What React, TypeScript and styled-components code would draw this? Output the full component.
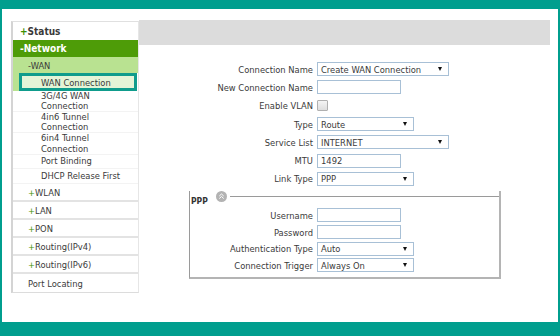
import styled, { createGlobalStyle } from "styled-components";

const GlobalStyle = createGlobalStyle`
  html, body {
    margin: 0;
    padding: 0;
    background: #009e8e;
  }
  body {
    font-family: "DejaVu Sans Condensed", "DejaVu Sans", sans-serif;
    font-stretch: condensed;
    font-size: 9.3px;
    color: #3a3a3a;
  }
`;

const Frame = styled.div`
  margin: 9px 0 0 2px;
  width: 556px;
  height: 313px;
  background: #ffffff;
  box-sizing: border-box;
  padding: 12px 0 0 9px;
  display: flex;
  align-items: flex-start;
`;

const Sidebar = styled.nav`
  width: 128px;
  box-sizing: border-box;
  border-left: 2px solid #d4d4d4;
  border-right: 1px solid #e6e6e6;
  border-top: 1px solid #e0e0e0;
  border-bottom: 1px solid #dcdcdc;
`;

const MenuRow = styled.div<{ $level: number; $h?: number; $bold?: boolean; $bg?: string; $color?: string; $line?: boolean }>`
  height: ${(p) => p.$h || 18}px;
  display: flex;
  align-items: center;
  padding-left: ${(p) => (p.$level === 0 ? 7 : 15)}px;
  font-weight: ${(p) => (p.$bold ? "bold" : "normal")};
  font-size: ${(p) => (p.$bold ? "10px" : "9.3px")};
  background: ${(p) => p.$bg || "transparent"};
  color: ${(p) => p.$color || "#3a3a3a"};
  border-bottom: ${(p) => (p.$line ? "2px solid #e3e3e3" : "none")};
  box-sizing: border-box;
`;

const Plus = styled.span<{ $bold?: boolean }>`
  color: #3c8f00;
  font-weight: ${(p) => (p.$bold ? "bold" : "normal")};
`;

const SubItem = styled.div<{ $h: number }>`
  height: ${(p) => p.$h}px;
  box-sizing: border-box;
  padding-left: 28px;
  display: flex;
  align-items: center;
  line-height: 10.5px;
  border-bottom: 1px solid #f3f3f3;
`;

const SubText = styled.span<{ $wrap: boolean }>`
  width: ${(p) => (p.$wrap ? "64px" : "auto")};
  white-space: ${(p) => (p.$wrap ? "normal" : "nowrap")};
`;

const SelectedWrap = styled.div`
  height: 18px;
  background: linear-gradient(to right, #b9e291 6px, transparent 6px);
`;

const SelectedItem = styled.div`
  margin-left: 6px;
  width: 118px;
  height: 18px;
  box-sizing: border-box;
  border: 3px solid #0f9c8c;
  background: #e4f4d7;
  padding-left: 19px;
  display: flex;
  align-items: center;
`;

const Main = styled.main`
  flex: 1;
  margin-top: -1px;
`;

const HeaderBar = styled.div`
  width: 411px;
  height: 25px;
  background: #dcdcdc;
`;

const Form = styled.div<{ $label: number }>`
  display: grid;
  grid-template-columns: ${(p) => p.$label}px 1fr;
  column-gap: 4px;
  align-items: center;
`;

const MainForm = styled(Form)`
  margin-top: 15px;
  grid-auto-rows: 18.3px;
`;

const BoxForm = styled(Form)`
  grid-auto-rows: 16.7px;
  margin-top: 6px;
`;

const Label = styled.div`
  text-align: right;
  white-space: nowrap;
`;

const Input = styled.div<{ $w: number }>`
  width: ${(p) => p.$w}px;
  height: 14px;
  box-sizing: border-box;
  border: 1px solid #a8c0d6;
  background: #fff;
  padding-left: 3px;
  display: flex;
  align-items: center;
`;

const Select = styled(Input)`
  justify-content: space-between;
  padding-right: 6px;
  &::after {
    content: "";
    border-left: 2.5px solid transparent;
    border-right: 2.5px solid transparent;
    border-top: 4px solid #111;
  }
`;

const Checkbox = styled.div`
  width: 9px;
  height: 9px;
  border: 1px solid #b0b0b0;
  background: linear-gradient(#f4f4f4, #dedede);
  border-radius: 1px;
`;

const Box = styled.div`
  margin: 8px 0 0 50px;
  width: 312px;
  height: 88px;
  box-sizing: border-box;
  border-left: 1px solid #9a9a9a;
  border-right: 2px solid #b4b4b4;
  border-bottom: 2px solid #b4b4b4;
`;

const BoxHead = styled.div`
  display: flex;
  align-items: flex-start;
  margin-top: -5px;
  height: 10px;
`;

const BoxTitle = styled.span`
  font-size: 8.5px;
  font-weight: bold;
  margin: 5px 0 0 1px;
  color: #333;
`;

const Toggle = styled.svg`
  margin-left: 8px;
  flex: none;
`;

const HeadLine = styled.div`
  flex: 1;
  margin: 5px 0 0 3px;
  border-top: 1px solid #9a9a9a;
`;

const subItems: [string, number][] = [
  ["3G/4G WAN Connection", 21],
  ["4in6 Tunnel Connection", 21],
  ["6in4 Tunnel Connection", 22],
  ["Port Binding", 14],
  ["DHCP Release First", 15],
];

const groups = ["WLAN", "LAN", "PON", "Routing(IPv4)", "Routing(IPv6)"];

export default function App() {
  return (
    <>
      <GlobalStyle />
      <Frame>
        <Sidebar>
          <MenuRow $level={0} $bold>
            <Plus $bold>+</Plus>Status
          </MenuRow>
          <MenuRow $level={0} $h={17} $bold $bg="#4e9c08" $color="#fff">
            -Network
          </MenuRow>
          <MenuRow $level={1} $h={16} $bg="#b9e291">
            -WAN
          </MenuRow>
          <SelectedWrap>
            <SelectedItem>WAN Connection</SelectedItem>
          </SelectedWrap>
          {subItems.map(([t, h]) => (
            <SubItem key={t} $h={h}>
              <SubText $wrap={h > 20}>{t}</SubText>
            </SubItem>
          ))}
          {groups.map((g) => (
            <MenuRow key={g} $level={1} $line>
              <Plus>+</Plus>
              {g}
            </MenuRow>
          ))}
          <MenuRow $level={1}>Port Locating</MenuRow>
        </Sidebar>

        <Main>
          <HeaderBar />
          <MainForm $label={174}>
            <Label>Connection Name</Label>
            <Select $w={132}>Create WAN Connection</Select>
            <Label>New Connection Name</Label>
            <Input $w={84} />
            <Label>Enable VLAN</Label>
            <Checkbox />
            <Label>Type</Label>
            <Select $w={97}>Route</Select>
            <Label>Service List</Label>
            <Select $w={132}>INTERNET</Select>
            <Label>MTU</Label>
            <Input $w={84}>1492</Input>
            <Label>Link Type</Label>
            <Select $w={97}>PPP</Select>
          </MainForm>

          <Box>
            <BoxHead>
              <BoxTitle>PPP</BoxTitle>
              <Toggle width="11" height="11" viewBox="0 0 11 11">
                <circle cx="5.5" cy="5.5" r="5.5" fill="#b3b3b3" />
                <polyline points="3.3,5 5.5,3 7.7,5" fill="none" stroke="#fff" strokeWidth="1" />
                <polyline points="3.3,7.5 5.5,5.5 7.7,7.5" fill="none" stroke="#fff" strokeWidth="1" />
              </Toggle>
              <HeadLine />
            </BoxHead>
            <BoxForm $label={123}>
              <Label>Username</Label>
              <Input $w={84} />
              <Label>Password</Label>
              <Input $w={84} />
              <Label>Authentication Type</Label>
              <Select $w={97}>Auto</Select>
              <Label>Connection Trigger</Label>
              <Select $w={97}>Always On</Select>
            </BoxForm>
          </Box>
        </Main>
      </Frame>
    </>
  );
}
